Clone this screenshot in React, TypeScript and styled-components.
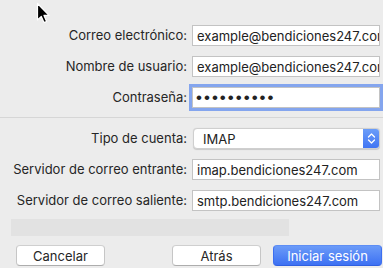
import React from "react";
import styled, { createGlobalStyle } from "styled-components";

const FONT = `Inter, "Liberation Sans", Arial, sans-serif`;

const GlobalStyle = createGlobalStyle`
  html, body {
    margin: 0;
    padding: 0;
    background: #ececec;
    font-family: ${FONT};
    font-size: 13px;
    color: #262626;
    overflow: hidden;
  }
`;

const Sheet = styled.div`
  position: relative;
  width: 383px;
  height: 268px;
  padding-top: 25px;
  box-sizing: border-box;
`;

const Form = styled.div`
  display: grid;
  grid-template-columns: 187px 188px;
  column-gap: 5px;
  row-gap: 10px;
  align-items: center;
`;

const Label = styled.label`
  text-align: right;
  white-space: nowrap;
  line-height: 21px;
`;

const Field = styled.input<{ $focused?: boolean }>`
  box-sizing: border-box;
  height: 21px;
  width: 100%;
  margin: 0;
  padding: 0 0 0 4px;
  border: 1px solid #c3c3c3;
  border-radius: 0;
  background: #fff;
  font-family: ${FONT};
  font-size: 13px;
  color: #222;
  outline: none;
  box-shadow: ${(p) => (p.$focused ? "0 0 0 3px #84a5ee" : "none")};
`;

const Dots = styled(Field)`
  font-family: "Liberation Sans", Arial, sans-serif;
  font-size: 17px;
  letter-spacing: 2px;
  padding-left: 3px;
`;

const Separator = styled.div`
  height: 1px;
  background: #d6d6d6;
  margin: 9px 0 10px;
`;

const Select = styled.div`
  box-sizing: border-box;
  height: 21px;
  display: flex;
  align-items: center;
  background: #fff;
  border: 1px solid #cfcfcf;
  border-radius: 4px;
  box-shadow: 0 0.5px 1px rgba(0, 0, 0, 0.15);
  overflow: hidden;
  padding-left: 9px;
  margin-left: 1px;
`;

const SelectText = styled.span`
  flex: 1;
  color: #222;
`;

const Stepper = styled.div`
  width: 17px;
  height: 21px;
  margin: -1px -1px -1px 0;
  background: linear-gradient(#6d9ff9, #3f73f3);
  display: flex;
  align-items: center;
  justify-content: center;
  border-radius: 0 4px 4px 0;
`;

const Progress = styled.div`
  height: 17px;
  width: 278px;
  margin: 8px 0 0 11px;
  background: #e2e2e2;
`;

const Buttons = styled.div`
  display: flex;
  align-items: center;
  padding: 9px 1px 0 16px;
`;

const Button = styled.button<{ $primary?: boolean }>`
  box-sizing: border-box;
  flex: none;
  height: 21px;
  width: ${(p) => (p.$primary ? "109px" : "89px")};
  margin: 0;
  padding: 0;
  border-radius: 4px;
  font-family: ${FONT};
  font-size: 13px;
  border: 1px solid ${(p) => (p.$primary ? "#3d6ff0" : "#c6c6c6")};
  border-top-color: ${(p) => (p.$primary ? "#5e8ef5" : "#cfcfcf")};
  border-bottom-color: ${(p) => (p.$primary ? "#2f5fe0" : "#adadad")};
  color: ${(p) => (p.$primary ? "#fff" : "#262626")};
  background: ${(p) =>
    p.$primary ? "linear-gradient(#6b9bf8, #3d71f3)" : "#fff"};
`;

const Spacer = styled.div`
  flex: 1;
`;

const Gap = styled.div`
  width: 12px;
`;

const Cursor = styled.svg`
  position: absolute;
  left: 35px;
  top: 2px;
`;

export default function App() {
  return (
    <>
      <GlobalStyle />
      <Sheet>
        <Cursor width="16" height="24" viewBox="0 0 16 24">
          <path
            d="M2.5 1.5 L2.5 18 L6.3 14.4 L9 20.6 L11.6 19.5 L9 13.4 L14 13.4 Z"
            fill="#000"
            stroke="#fff"
            strokeWidth="1.2"
            strokeLinejoin="round"
          />
        </Cursor>
        <Form>
          <Label>Correo electrónico:</Label>
          <Field readOnly value="example@bendiciones247.com" />
          <Label>Nombre de usuario:</Label>
          <Field readOnly value="example@bendiciones247.com" />
          <Label>Contraseña:</Label>
          <Dots readOnly value="••••••••••" $focused />
        </Form>
        <Separator />
        <Form>
          <Label>Tipo de cuenta:</Label>
          <Select>
            <SelectText>IMAP</SelectText>
            <Stepper>
              <svg width="9" height="13" viewBox="0 0 9 13">
                <path
                  d="M1.5 5 L4.5 2 L7.5 5 M1.5 8 L4.5 11 L7.5 8"
                  fill="none"
                  stroke="#fff"
                  strokeWidth="1.3"
                  strokeLinecap="round"
                  strokeLinejoin="round"
                />
              </svg>
            </Stepper>
          </Select>
          <Label>Servidor de correo entrante:</Label>
          <Field readOnly value="imap.bendiciones247.com" />
          <Label>Servidor de correo saliente:</Label>
          <Field readOnly value="smtp.bendiciones247.com" />
        </Form>
        <Progress />
        <Buttons>
          <Button>Cancelar</Button>
          <Spacer />
          <Button>Atrás</Button>
          <Gap />
          <Button $primary>Iniciar sesión</Button>
        </Buttons>
      </Sheet>
    </>
  );
}
